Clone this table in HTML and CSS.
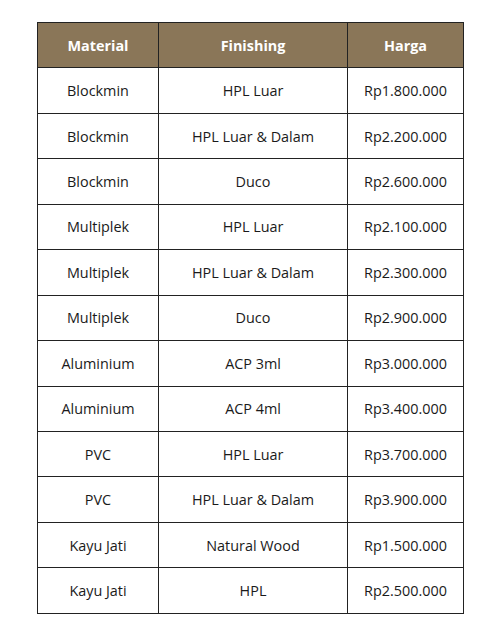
FILE: index.html
```html
<!DOCTYPE html>
<html lang="id">
<head>
<meta charset="utf-8">
<title>Harga</title>
<link rel="stylesheet" href="styles.css">
</head>
<body>
<table class="price">
<colgroup><col class="c1"><col class="c2"><col class="c3"></colgroup>
<thead>
<tr><th>Material</th><th>Finishing</th><th>Harga</th></tr>
</thead>
<tbody>
<tr><td>Blockmin</td><td>HPL Luar</td><td>Rp1.800.000</td></tr>
<tr><td>Blockmin</td><td>HPL Luar &amp; Dalam</td><td>Rp2.200.000</td></tr>
<tr><td>Blockmin</td><td>Duco</td><td>Rp2.600.000</td></tr>
<tr><td>Multiplek</td><td>HPL Luar</td><td>Rp2.100.000</td></tr>
<tr><td>Multiplek</td><td>HPL Luar &amp; Dalam</td><td>Rp2.300.000</td></tr>
<tr><td>Multiplek</td><td>Duco</td><td>Rp2.900.000</td></tr>
<tr><td>Aluminium</td><td>ACP 3ml</td><td>Rp3.000.000</td></tr>
<tr><td>Aluminium</td><td>ACP 4ml</td><td>Rp3.400.000</td></tr>
<tr><td>PVC</td><td>HPL Luar</td><td>Rp3.700.000</td></tr>
<tr><td>PVC</td><td>HPL Luar &amp; Dalam</td><td>Rp3.900.000</td></tr>
<tr><td>Kayu Jati</td><td>Natural Wood</td><td>Rp1.500.000</td></tr>
<tr><td>Kayu Jati</td><td>HPL</td><td>Rp2.500.000</td></tr>
</tbody>
</table>
</body>
</html>
```
FILE: styles.css
```css
html, body {
  margin: 0;
  padding: 0;
  background: #ffffff;
}
body {
  padding: 22px 0 0 37px;
  font-family: "Open Sans", "Liberation Sans", sans-serif;
  color: #1a1a1a;
}
.price {
  border-collapse: collapse;
  width: 426px;
  table-layout: fixed;
  font-size: 14.4px;
}
.c1 { width: 121px; }
.c2 { width: 189px; }
.c3 { width: 116px; }
.price th,
.price td {
  border: 1px solid #222222;
  height: 45.45px;
  padding: 0;
  text-align: center;
  vertical-align: middle;
  box-sizing: border-box;
}
.price th {
  background: #8a7658;
  color: #ffffff;
  font-weight: 700;
}
```
